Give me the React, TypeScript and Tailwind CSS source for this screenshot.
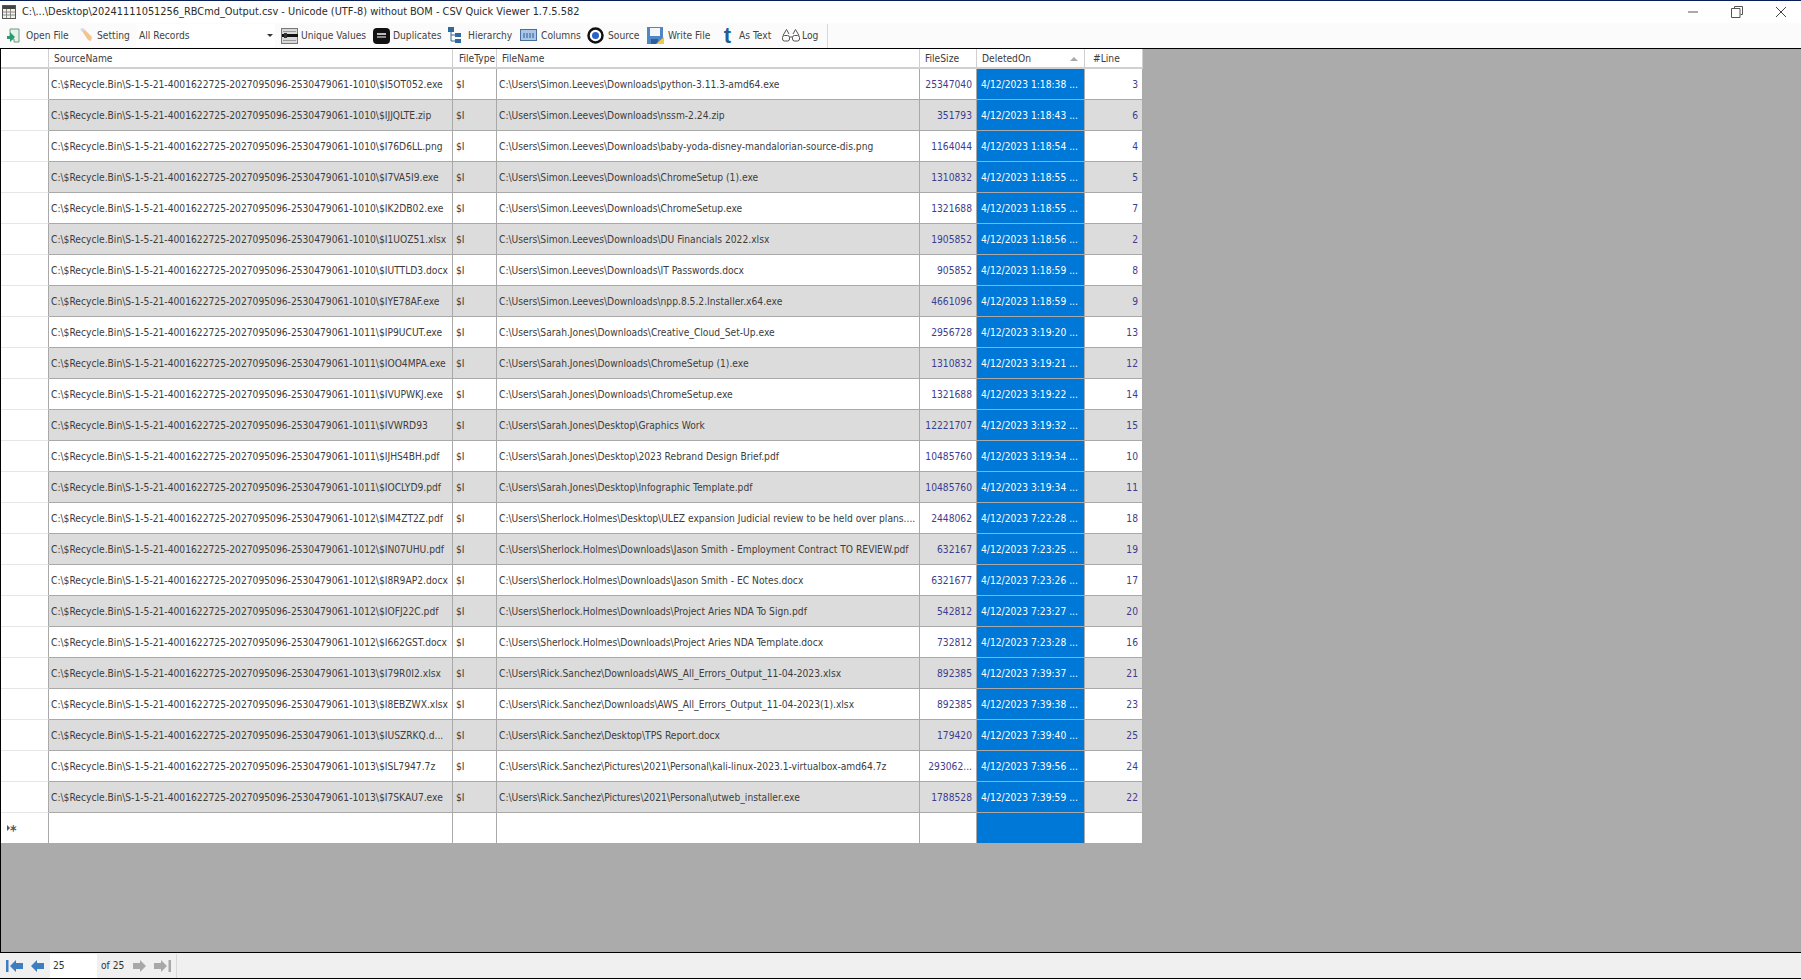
import type { ReactNode } from "react";

const PRE = "C:\\$Recycle.Bin\\S-1-5-21-4001622725-2027095096-2530479061-";

const rows = [
  ["1010\\$I5OT052.exe", "C:\\Users\\Simon.Leeves\\Downloads\\python-3.11.3-amd64.exe", "25347040", "4/12/2023 1:18:38 ...", "3"],
  ["1010\\$IJJQLTE.zip", "C:\\Users\\Simon.Leeves\\Downloads\\nssm-2.24.zip", "351793", "4/12/2023 1:18:43 ...", "6"],
  ["1010\\$I76D6LL.png", "C:\\Users\\Simon.Leeves\\Downloads\\baby-yoda-disney-mandalorian-source-dis.png", "1164044", "4/12/2023 1:18:54 ...", "4"],
  ["1010\\$I7VA5I9.exe", "C:\\Users\\Simon.Leeves\\Downloads\\ChromeSetup (1).exe", "1310832", "4/12/2023 1:18:55 ...", "5"],
  ["1010\\$IK2DB02.exe", "C:\\Users\\Simon.Leeves\\Downloads\\ChromeSetup.exe", "1321688", "4/12/2023 1:18:55 ...", "7"],
  ["1010\\$I1UOZ51.xlsx", "C:\\Users\\Simon.Leeves\\Downloads\\DU Financials 2022.xlsx", "1905852", "4/12/2023 1:18:56 ...", "2"],
  ["1010\\$IUTTLD3.docx", "C:\\Users\\Simon.Leeves\\Downloads\\IT Passwords.docx", "905852", "4/12/2023 1:18:59 ...", "8"],
  ["1010\\$IYE78AF.exe", "C:\\Users\\Simon.Leeves\\Downloads\\npp.8.5.2.Installer.x64.exe", "4661096", "4/12/2023 1:18:59 ...", "9"],
  ["1011\\$IP9UCUT.exe", "C:\\Users\\Sarah.Jones\\Downloads\\Creative_Cloud_Set-Up.exe", "2956728", "4/12/2023 3:19:20 ...", "13"],
  ["1011\\$IOO4MPA.exe", "C:\\Users\\Sarah.Jones\\Downloads\\ChromeSetup (1).exe", "1310832", "4/12/2023 3:19:21 ...", "12"],
  ["1011\\$IVUPWKJ.exe", "C:\\Users\\Sarah.Jones\\Downloads\\ChromeSetup.exe", "1321688", "4/12/2023 3:19:22 ...", "14"],
  ["1011\\$IVWRD93", "C:\\Users\\Sarah.Jones\\Desktop\\Graphics Work", "12221707", "4/12/2023 3:19:32 ...", "15"],
  ["1011\\$IJHS4BH.pdf", "C:\\Users\\Sarah.Jones\\Desktop\\2023 Rebrand Design Brief.pdf", "10485760", "4/12/2023 3:19:34 ...", "10"],
  ["1011\\$IOCLYD9.pdf", "C:\\Users\\Sarah.Jones\\Desktop\\Infographic Template.pdf", "10485760", "4/12/2023 3:19:34 ...", "11"],
  ["1012\\$IM4ZT2Z.pdf", "C:\\Users\\Sherlock.Holmes\\Desktop\\ULEZ expansion Judicial review to be held over plans....", "2448062", "4/12/2023 7:22:28 ...", "18"],
  ["1012\\$IN07UHU.pdf", "C:\\Users\\Sherlock.Holmes\\Downloads\\Jason Smith - Employment Contract TO REVIEW.pdf", "632167", "4/12/2023 7:23:25 ...", "19"],
  ["1012\\$I8R9AP2.docx", "C:\\Users\\Sherlock.Holmes\\Downloads\\Jason Smith - EC Notes.docx", "6321677", "4/12/2023 7:23:26 ...", "17"],
  ["1012\\$IOFJ22C.pdf", "C:\\Users\\Sherlock.Holmes\\Downloads\\Project Aries NDA To Sign.pdf", "542812", "4/12/2023 7:23:27 ...", "20"],
  ["1012\\$I662GST.docx", "C:\\Users\\Sherlock.Holmes\\Downloads\\Project Aries NDA Template.docx", "732812", "4/12/2023 7:23:28 ...", "16"],
  ["1013\\$I79R0I2.xlsx", "C:\\Users\\Rick.Sanchez\\Downloads\\AWS_All_Errors_Output_11-04-2023.xlsx", "892385", "4/12/2023 7:39:37 ...", "21"],
  ["1013\\$I8EBZWX.xlsx", "C:\\Users\\Rick.Sanchez\\Downloads\\AWS_All_Errors_Output_11-04-2023(1).xlsx", "892385", "4/12/2023 7:39:38 ...", "23"],
  ["1013\\$IUSZRKQ.d...", "C:\\Users\\Rick.Sanchez\\Desktop\\TPS Report.docx", "179420", "4/12/2023 7:39:40 ...", "25"],
  ["1013\\$ISL7947.7z", "C:\\Users\\Rick.Sanchez\\Pictures\\2021\\Personal\\kali-linux-2023.1-virtualbox-amd64.7z", "293062...", "4/12/2023 7:39:56 ...", "24"],
  ["1013\\$I7SKAU7.exe", "C:\\Users\\Rick.Sanchez\\Pictures\\2021\\Personal\\utweb_installer.exe", "1788528", "4/12/2023 7:39:59 ...", "22"],
];

const cols = "grid grid-cols-[48px_404px_44px_423px_57px_108px_58px] w-[1142px]";

const Arrow = ({ flip, bar, color }: { flip?: boolean; bar?: boolean; color: string }) => (
  <svg width={bar ? 18 : 15} height="14" viewBox={bar ? "0 0 18 14" : "0 0 15 14"} className={flip ? "-scale-x-100" : ""}>
    {bar && <rect x="0" y="1" width="2.5" height="12" fill={color} />}
    <path d={bar ? "M4 7 10 1v3h7v6h-7v3z" : "M1 7 7 1v3h7v6H7v3z"} fill={color} />
  </svg>
);

const Tool = ({ icon, label, className }: { icon: ReactNode; label: string; className: string }) => (
  <div className={`flex items-center shrink-0 ${className}`}>
    {icon}
    <span>{label}</span>
  </div>
);

const Header = ({ label, className = "", children }: { label: string; className?: string; children?: ReactNode }) => (
  <div className={`bg-white border-r border-b-2 border-[#d0d0d0] pl-[5px] pt-[2px] flex items-center relative overflow-hidden whitespace-nowrap ${className}`}>
    {label}
    {children}
  </div>
);

const App = () => {
  return (
    <div className="h-screen w-full bg-white flex flex-col overflow-hidden border-t border-[#0b1f57] font-['DejaVu_Sans_Condensed','Liberation_Sans',sans-serif] text-[10.2px] text-[#3c3c3c]">
      {/* Title bar */}
      <div className="h-[22px] shrink-0 flex items-center text-[10.9px] text-[#2b2b2b]">
        <svg width="14" height="14" viewBox="0 0 14 14" className="ml-[2px]">
          <rect x="0.5" y="0.5" width="13" height="13" fill="#f4f1e6" stroke="#555" />
          <rect x="1" y="1" width="12" height="3" fill="#444" />
          <path d="M4.5 4v9M8.5 4v9M1 7h12M1 10h12" stroke="#8a8a8a" />
        </svg>
        <span className="ml-[6px]">C:\...\Desktop\20241111051256_RBCmd_Output.csv - Unicode (UTF-8) without BOM - CSV Quick Viewer 1.7.5.582</span>
        <div className="ml-auto flex items-center">
          <svg width="12" height="12" viewBox="0 0 12 12" className="mr-[32px]"><path d="M1 6h10" stroke="#555" /></svg>
          <svg width="12" height="12" viewBox="0 0 12 12" className="mr-[32px]"><path d="M3.5 2.5V.5h8v8h-2M.5 2.5h8.500v9h-8.500z" stroke="#555" fill="none" /></svg>
          <svg width="12" height="12" viewBox="0 0 12 12" className="mr-[14px]"><path d="M1 1l10 10M11 1 1 11" stroke="#444" /></svg>
        </div>
      </div>

      {/* Toolbar */}
      <div className="h-[26px] shrink-0 bg-[#fbfbfb] flex items-center border-b border-black text-[#444]">
        <Tool
          className="ml-[6px] w-[73px] gap-[6px]"
          label="Open File"
          icon={<svg width="14" height="16" viewBox="0 0 14 16"><path d="M4 1h9v13H8v-3H4z" fill="#e8f0ea" stroke="#6d9a84" /><path d="M1 8h3V4l5 5-5 5v-3H1z" fill="#2b9a70" /></svg>}
        />
        <Tool
          className="w-[57px] gap-[4px]"
          label="Setting"
          icon={<svg width="14" height="14" viewBox="0 0 14 14"><path d="M3 3 5 1l8 8-1 4-3-1z" fill="#f3c48e" /><path d="M1 1 4 0 6 2 3 4z" fill="#d6dae2" /></svg>}
        />
        <div className="w-[139px] h-[23px] bg-white flex items-center pl-[3px] relative shrink-0">
          All Records
          <span className="absolute right-[2px] top-[10px] border-x-[3px] border-t-[3px] border-x-transparent border-t-[#333]" />
        </div>
        <Tool
          className="ml-[6px] w-[92px] gap-[3px]"
          label="Unique Values"
          icon={<svg width="17" height="16" viewBox="0 0 17 16"><rect x="0.500" y="0.500" width="16" height="15" fill="#d8d8d8" stroke="#777" /><path d="M2 3.500h13M2 12.500h13" stroke="#999" /><rect x="1" y="6" width="16" height="3" fill="#111" /><rect x="3" y="5" width="3" height="5" fill="#333" /></svg>}
        />
        <Tool
          className="w-[75px] gap-[3px]"
          label="Duplicates"
          icon={<svg width="17" height="16" viewBox="0 0 17 16"><rect width="17" height="16" rx="4" fill="#111" /><rect x="4" y="5" width="9" height="2" fill="#bbb" /><rect x="4" y="8" width="9" height="2" fill="#888" /></svg>}
        />
        <Tool
          className="w-[72px] gap-[7px]"
          label="Hierarchy"
          icon={<svg width="13" height="17" viewBox="0 0 13 17"><rect x="0" y="0" width="6" height="5" fill="#2e6a9e" /><rect x="7" y="6" width="6" height="4" fill="#2e6a9e" /><rect x="7" y="12" width="6" height="4" fill="#2e6a9e" /><path d="M3 5v9h4M3 8h4" stroke="#2e6a9e" fill="none" /></svg>}
        />
        <Tool
          className="w-[67px] gap-[4px]"
          label="Columns"
          icon={<svg width="17" height="12" viewBox="0 0 17 12"><rect x="0.500" y="0.500" width="16" height="11" fill="#a9c6e8" stroke="#47709e" /><path d="M4 4v5M7 4v5M10 4v5M13 4v5" stroke="#2f5a8e" /></svg>}
        />
        <Tool
          className="w-[60px] gap-[4px]"
          label="Source"
          icon={<svg width="17" height="17" viewBox="0 0 17 17"><circle cx="8.500" cy="8.500" r="7" fill="#fff" stroke="#111" strokeWidth="2.500" /><circle cx="8.500" cy="8.500" r="3.500" fill="#2a62c8" /></svg>}
        />
        <Tool
          className="w-[75px] gap-[4px]"
          label="Write File"
          icon={<svg width="17" height="18" viewBox="0 0 17 18"><rect width="16" height="17" fill="#4f86c4" /><rect x="3" y="1" width="10" height="8" fill="#f2f6fa" /><rect x="4" y="12" width="7" height="5" fill="#2f5f98" /><path d="M9 17l8-7v7z" fill="#f2c84a" /></svg>}
        />
        <Tool
          className="w-[60px] gap-[6px]"
          label="As Text"
          icon={<span className="text-[22px] leading-none font-bold text-[#1f5f96] font-['Liberation_Sans',sans-serif] w-[11px] text-center">t</span>}
        />
        <Tool
          className="w-[45px] gap-[2px]"
          label="Log"
          icon={<svg width="18" height="14" viewBox="0 0 18 14"><rect x="0.500" y="7.500" width="7" height="5.500" rx="2" fill="none" stroke="#555" /><rect x="10.500" y="7.500" width="7" height="5.500" rx="2" fill="none" stroke="#555" /><path d="M7.500 9h3M1 7.500 4.500 1.500 7 6M17 7.500 13.500 1.500 11 6" stroke="#555" fill="none" /></svg>}
        />
        <div className="w-px h-[24px] bg-[#d8d8d8]" />
      </div>

      {/* Grid */}
      <div className="flex-1 min-h-0 bg-[#ababab] border-l border-black">
        <div className={`${cols} h-[20px] bg-white`}>
          <Header label="" />
          <Header label="SourceName" />
          <Header label="FileType" className="pl-[6px]" />
          <Header label="FileName" />
          <Header label="FileSize" />
          <Header label="DeletedOn">
            <span className="absolute right-[6px] top-[8px] border-x-[4px] border-b-[4px] border-x-transparent border-b-[#a9a9a9]" />
          </Header>
          <Header label="#Line" className="pl-[8px]" />
        </div>
        {rows.map((r, i) => {
          const bg = i % 2 === 0 ? "bg-white" : "bg-[#dcdcdc]";
          const cell = `${bg} border-r border-b border-[#a9a9a9] flex items-center pt-px whitespace-nowrap overflow-hidden`;
          return (
            <div key={i} className={`${cols} h-[31px]`}>
              <div className="bg-white border-r border-b border-r-[#a9a9a9] border-b-[#e6e6e6]" />
              <div className={`${cell} pl-[2px]`}>{PRE + r[0]}</div>
              <div className={`${cell} pl-[3px]`}>$I</div>
              <div className={`${cell} pl-[2px]`}>{r[1]}</div>
              <div className={`${cell} justify-end pr-[4px] text-[#3d3d8f]`}>{r[2]}</div>
              <div className="bg-[#0078d7] border-r border-b border-[#a9a9a9] flex items-center pt-px pl-[4px] text-white whitespace-nowrap">{r[3]}</div>
              <div className={`${cell} justify-end pr-[4px] text-[#3d3d8f]`}>{r[4]}</div>
            </div>
          );
        })}
        <div className={`${cols} h-[30px]`}>
          <div className="bg-white border-r border-[#a9a9a9] flex items-center pl-[6px] text-[14px] font-bold text-[#555]">
            <span className="border-y-[3px] border-l-[3px] border-y-transparent border-l-[#555]" />
            <span className="leading-none pt-[3px]">*</span>
          </div>
          <div className="bg-white border-r border-[#a9a9a9]" />
          <div className="bg-white border-r border-[#a9a9a9]" />
          <div className="bg-white border-r border-[#a9a9a9]" />
          <div className="bg-white border-r border-[#a9a9a9]" />
          <div className="bg-[#0078d7] border-r border-[#a9a9a9]" />
          <div className="bg-white border-r border-[#a9a9a9]" />
        </div>
      </div>

      {/* Pager */}
      <div className="h-[27px] mb-px shrink-0 bg-[#f0f0f0] border-y border-y-black flex items-center text-[#333]">
        <div className="ml-[6px] flex items-center"><Arrow bar color="#3f7cc0" /></div>
        <div className="ml-[6px] flex items-center"><Arrow color="#3f7cc0" /></div>
        <div className="ml-[5px] w-[47px] h-[24px] bg-white flex items-center pl-[3px]">25</div>
        <span className="ml-[4px] w-[31px]">of 25</span>
        <div className="flex items-center"><Arrow flip color="#a8a8a8" /></div>
        <div className="ml-[6px] flex items-center"><Arrow flip bar color="#a8a8a8" /></div>
        <div className="ml-[5px] w-px h-[24px] bg-[#d8d8d8]" />
      </div>
    </div>
  );
};

export default App;
